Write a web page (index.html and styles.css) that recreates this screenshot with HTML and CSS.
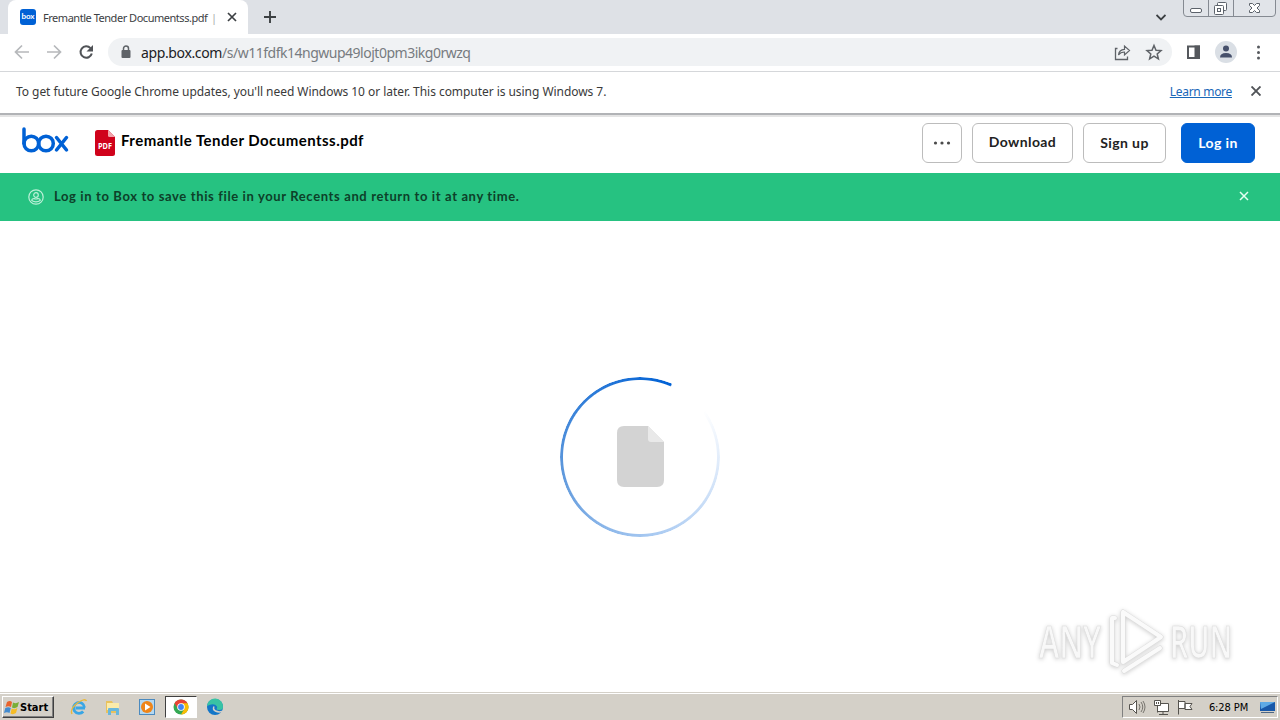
FILE: index.html
```html
<!DOCTYPE html>
<html lang="en">
<head>
    <meta charset="UTF-8">
    <title>Fremantle Tender Documentss.pdf | Box</title>
    <link rel="stylesheet" href="styles.css">
</head>
<body>
    <div class="tab-strip">
        <div class="tab">
            <div class="favicon">box</div>
            <span class="tab-title">Fremantle Tender Documentss.pdf</span>
            <span class="tab-more">|</span>
            <svg class="tab-close" width="10" height="10" viewBox="0 0 10 10"><path d="M1 1l8 8M9 1l-8 8" stroke="#3c4043" stroke-width="1.7"/></svg>
        </div>
        <svg class="new-tab" width="12" height="12" viewBox="0 0 12 12"><path d="M6 0v12M0 6h12" stroke="#3c4043" stroke-width="1.9"/></svg>
        <svg class="tab-search" width="10" height="7" viewBox="0 0 10 7"><path d="M.5 1L5 5.500 9.500 1" fill="none" stroke="#3c4043" stroke-width="1.8"/></svg>
        <svg class="window-buttons" width="93" height="18" viewBox="0 0 93 18">
            <path d="M.5 0v13q0 3.500 3.500 3.500h85q3.500 0 3.500-3.500V0M25.500 0v16.500M50.500 0v16.500" fill="#e1e4e9" stroke="#858a92"/>
            <rect x="7.500" y="8.500" width="11" height="4" rx="1.500" fill="#fff" stroke="#5c626b"/>
            <rect x="34.500" y="2.500" width="9" height="8" rx="1" fill="#fff" stroke="#5c626b"/>
            <rect x="31.500" y="5.500" width="9" height="9" rx="1" fill="#fff" stroke="#5c626b"/>
            <rect x="34.500" y="8.500" width="3" height="3" fill="#fff" stroke="#5c626b"/>
            <path d="M66.500 3.500h3l2 2 2-2h3v2l-2.500 2.500 2.500 2.500v2h-3l-2-2-2 2h-3v-2l2.500-2.500-2.500-2.500z" fill="#fff" stroke="#5c626b"/>
        </svg>
    </div>

    <div class="toolbar">
        <svg class="nav" width="110" height="37" viewBox="0 0 110 37" fill="none">
            <path d="M29 18H16M22 11.500L15.500 18l6.500 6.500M47 18h13M54 11.500l6.500 6.500-6.500 6.500" stroke="#b6b8bb" stroke-width="1.700"/>
            <path d="M90.500 14.200a5.700 5.700 0 1 0 1.300 5.300" stroke="#505357" stroke-width="2"/>
            <path d="M93 11v6.500h-6.500z" fill="#505357"/>
        </svg>
        <div class="omnibox">
            <svg width="10" height="14" viewBox="0 0 10 14"><rect x=".5" y="5" width="9" height="8" rx="1" fill="#5f6368"/><path d="M2.500 6V3.500a2.500 2.500 0 0 1 5 0V6" fill="none" stroke="#5f6368" stroke-width="1.500"/></svg>
            <span class="url"><span class="host">app.box.com</span>/s/w11fdfk14ngwup49lojt0pm3ikg0rwzq</span>
            <svg class="omni-icons" width="50" height="18" viewBox="0 0 50 18" fill="none" stroke="#5f6368">
                <path d="M3.500 5.500H1.500v11h12v-3" stroke-width="1.300"/>
                <path d="M4.500 12q.5-5.500 6-5.700V3l5 4.500-5 4.500V9q-4 0-6 3z" stroke-width="1.200"/>
                <path d="M40 2.500l2 4.700 5 .4-3.800 3.300 1.200 5-4.400-2.700-4.400 2.700 1.200-5-3.800-3.300 5-.4z" stroke-width="1.500"/>
            </svg>
        </div>
        <svg class="side-icons" width="108" height="37" viewBox="0 0 108 37">
            <path d="M16 12.500h11v11.500h-11z" fill="none" stroke="#55585d" stroke-width="2"/><path d="M22.500 11.500h5.500v13.500h-5.500z" fill="#55585d"/>
            <circle cx="54" cy="18" r="11" fill="#dadfe5"/>
            <circle cx="54" cy="14.500" r="3" fill="#46506b"/><path d="M48 23.500q0-4.500 6-4.500t6 4.500z" fill="#46506b"/>
            <g fill="#55585d"><circle cx="86.500" cy="13" r="1.500"/><circle cx="86.500" cy="18.500" r="1.500"/><circle cx="86.500" cy="24" r="1.500"/></g>
        </svg>
    </div>

    <div class="infobar">
        <span class="infobar-text">To get future Google Chrome updates, you'll need Windows 10 or later. This computer is using Windows 7.</span>
        <a class="learn-more">Learn more</a>
        <svg width="10" height="10" viewBox="0 0 10 10"><path d="M.5.5l9 9M9.500.5l-9 9" stroke="#505357" stroke-width="1.900"/></svg>
    </div>

    <header class="box-header">
        <svg class="box-logo" width="48" height="27" viewBox="0 0 48 27" fill="none" stroke="#0061d5" stroke-width="3.500" stroke-linecap="round">
            <path d="M2 2v14.500"/><circle cx="9.300" cy="16.500" r="7.300"/><circle cx="24" cy="16.500" r="7.300"/><path d="M34.500 10.500l10 12.500M44.500 10.500l-10 12.500"/>
        </svg>
        <svg class="pdf-icon" width="20" height="26" viewBox="0 0 20 26">
            <path d="M2.500 0H13l7 7v16.500q0 2.500-2.500 2.500h-15Q0 26 0 23.500v-21Q0 0 2.500 0z" fill="#d0021b"/>
            <path d="M13 0l7 7h-5.500q-1.500 0-1.500-1.500z" fill="#f2a3ab"/>
            <text x="10" y="18.500" class="pdf-label" textLength="14" lengthAdjust="spacingAndGlyphs">PDF</text>
        </svg>
        <h1>Fremantle Tender Documentss.pdf</h1>
        <div class="actions">
            <button class="btn more"><svg width="18" height="4" viewBox="0 0 18 4" fill="#4a4a4a"><circle cx="2.500" cy="2" r="1.600"/><circle cx="9" cy="2" r="1.600"/><circle cx="15.500" cy="2" r="1.600"/></svg></button>
            <button class="btn download">Download</button>
            <button class="btn signup">Sign up</button>
            <button class="btn login">Log in</button>
        </div>
    </header>

    <div class="notice">
        <svg width="16" height="16" viewBox="0 0 16 16" fill="none" stroke="#bdf0d8" stroke-width="1.200"><circle cx="8" cy="8" r="7.200"/><circle cx="8" cy="6" r="2.300"/><path d="M3.800 11.500q0-2 2.200-2 2 1 4 0 2.200 0 2.200 2-1.800 1.300-4.200 1.300t-4.200-1.300z"/></svg>
        <span class="notice-text">Log in to Box to save this file in your Recents and return to it at any time.</span>
        <svg class="notice-close" width="10" height="10" viewBox="0 0 10 10"><path d="M1 1l8 8M9 1l-8 8" stroke="#e4fff3" stroke-width="1.500"/></svg>
    </div>

    <main class="preview">
        <div class="loader">
            <div class="ring"></div>
            <svg class="loader-icon" width="47" height="61" viewBox="0 0 47 61">
                <path d="M7 0h24l16 16v38q0 7-7 7H7q-7 0-7-7V7q0-7 7-7z" fill="#d3d3d3"/>
                <path d="M31 0l16 16H34q-3 0-3-3z" fill="#e9e9e9"/>
            </svg>
        </div>
        <svg class="watermark" width="210" height="74" viewBox="0 0 210 74">
            <g class="mark-text">
                <text x="8" y="52" textLength="62" lengthAdjust="spacingAndGlyphs">ANY</text>
                <text x="139" y="52" textLength="62" lengthAdjust="spacingAndGlyphs">RUN</text>
            </g>
            <g fill="none" stroke-linejoin="round" stroke-linecap="round">
                <path class="mark-edge" d="M84 12h-3v45l5 2M92 56V6l38 25-38 25M92 6l38 25M93 65l36-23"/>
                <path class="mark-fill" d="M84 12h-3v45l5 2M92 56V6l38 25-38 25M92 6l38 25M93 65l36-23"/>
            </g>
        </svg>
    </main>

    <footer class="taskbar">
        <div class="start">
            <svg width="16" height="15" viewBox="0 0 16 15">
                <path d="M3 2q3-2 5 0L7 7Q4.500 5.500 1.500 7z" fill="#e8632c"/><path d="M9 2.500q3 1.500 6-.5L13.500 7q-3 2-5.500.5z" fill="#79ae36"/>
                <path d="M1.300 8q3-1.500 5.500 0l-1.300 5Q3 11.500 0 13z" fill="#438bcf"/><path d="M7.700 8.500q3 1.500 5.700-.5L12 13q-3 2-5.500.5z" fill="#f5bc26"/>
            </svg>
            <span>Start</span>
        </div>
        <div class="launchers">
            <svg width="18" height="18" viewBox="0 0 18 18"><path d="M15 10H5.500M14.500 9.500a5.500 5.500 0 1 0-1.300 4" fill="none" stroke="#39a6e5" stroke-width="2.800"/><path d="M2 16Q-.5 11 8 4.500 15 0 16.500 3" fill="none" stroke="#e9b83a" stroke-width="1.400"/></svg>
            <svg width="18" height="18" viewBox="0 0 18 18"><path d="M2 3h6l1 2h6v10H2z" fill="#e8c25e"/><path d="M3 5h12v7H3z" fill="#fbebaa"/><path d="M4 17v-6q0-1 1-1h9q1 0 1 1v6h-3v-4H7v4z" fill="#69b7dc"/></svg>
            <svg width="18" height="18" viewBox="0 0 18 18"><rect x="1.500" y="1.500" width="15" height="15" fill="#b4d8f1" stroke="#4b8abf"/><circle cx="9" cy="9" r="6" fill="#ef8519"/><path d="M7 5.500l5.500 3.500L7 12.500z" fill="#fff"/></svg>
            <div class="active-app">
                <svg width="16" height="16" viewBox="0 0 16 16"><circle cx="8" cy="8" r="7.500" fill="#34a853"/><path d="M1.500 4.250A7.500 7.500 0 0 1 14.500 4.250L8 8z" fill="#ea4335"/><path d="M1.500 4.250L5 10l3-2V4.500z" fill="#ea4335"/><path d="M8 4.250h6.500a7.500 7.500 0 0 1-6.500 11.250L11.500 9.500z" fill="#fbbc04"/><circle cx="8" cy="8" r="3.800" fill="#fff"/><circle cx="8" cy="8" r="2.900" fill="#4285f4"/></svg>
            </div>
            <svg width="18" height="18" viewBox="0 0 18 18">
                <circle cx="9" cy="9" r="8" fill="#1376c8"/><path d="M1 8A8 8 0 0 1 17 9q0 3-3.500 3-3 0-3-1 1-1 .5-2.500Q8 4.500 1 8z" fill="#38c3a4"/><path d="M8 8.500q-1.500 3 1.500 4.500t6.500.5" fill="none" stroke="#d4d0c8" stroke-width="1.500"/>
            </svg>
        </div>
        <div class="tray">
            <svg width="68" height="18" viewBox="0 0 68 18" stroke="#55534e" fill="#fff" stroke-width="1">
                <path d="M.5 6.500h3l4-4v13l-4-4h-3z"/><path d="M10 6q2 3 0 6M12 4q3.500 5 0 10M14 3q4 6 0 12" fill="none" stroke="#77746e"/>
                <path d="M28.500 5.500h11v8h-11zM30 16.500h9M34 13.500v3" /><path d="M25.500 2.500h6v5h-6zM27.500 4v2M29.500 4v2M28.500 7.500v7"/>
                <path d="M49.500 2v14.500M50 3.500h6v7h-6M56 5.500h7l-2 3 2 3h-7z"/>
            </svg>
            <span class="clock">6:28 PM</span>
            <svg width="17" height="14" viewBox="0 0 17 14"><path d="M1 2h15v9H1z" fill="#1858a9"/><path d="M1 2h15L2 9z" fill="#5eaae6"/><path d="M2 12h13v1H2z" fill="#4d6684"/></svg>
        </div>
    </footer>
</body>
</html>
```
FILE: styles.css
```css
* {
    box-sizing: border-box;
}

body {
    margin: 0;
    width: 1280px;
    height: 720px;
    overflow: hidden;
    display: flex;
    flex-direction: column;
    background: #fff;
    font-family: "Noto Sans", "Open Sans", sans-serif;
}

svg {
    display: block;
    flex: none;
}

span, a, h1 {
    white-space: nowrap;
}

/* browser chrome */
.tab-strip {
    height: 34px;
    flex: none;
    display: flex;
    align-items: flex-start;
    padding-left: 8px;
    background: #dee1e6;
}

.tab {
    width: 240px;
    height: 34px;
    display: flex;
    align-items: center;
    padding-left: 12px;
    background: #fff;
    border-radius: 8px 8px 0 0;
}

.favicon {
    width: 16px;
    height: 16px;
    border-radius: 3px;
    background: #0061d5;
    color: #fff;
    font: bold 8px/15px Lato, sans-serif;
    text-align: center;
}

.tab-title {
    margin-left: 7px;
    width: 168px;
    font-size: 11px;
    letter-spacing: -0.47px;
    color: #3c4043;
}

.tab-more {
    width: 16px;
    font-size: 11px;
    color: #aaa;
}

.new-tab {
    margin: 11px 0 0 16px;
}

.tab-search {
    margin: 14px 17px 0 auto;
}

.window-buttons {
    margin-right: 4px;
}

.toolbar {
    height: 38px;
    flex: none;
    display: flex;
    border-bottom: 1px solid #d5d7da;
}

.nav {
    margin-right: -2px;
}

.omnibox {
    width: 1064px;
    height: 28px;
    margin-top: 4px;
    padding: 0 8px 0 13px;
    display: flex;
    align-items: center;
    border-radius: 14px;
    background: #f0f2f4;
}

.url {
    margin-left: 10px;
    font-size: 14px;
    letter-spacing: -0.49px;
    color: #777b80;
}

.host {
    letter-spacing: -0.37px;
    color: #202124;
}

.omni-icons {
    margin-left: auto;
}

.infobar {
    height: 43px;
    flex: none;
    display: flex;
    align-items: center;
    padding: 0 19px 3px 16px;
    font-size: 12px;
    letter-spacing: -0.05px;
    color: #3a3a3a;
    border-bottom: 2px solid #b1b3b6;
}

.learn-more {
    margin: 0 19px 0 auto;
    letter-spacing: -0.3px;
    color: #1967b8;
    text-decoration: underline;
}

/* box page */
.box-header {
    height: 58px;
    flex: none;
    display: flex;
    border-top: 2px solid #e4e4e4;
    font-family: Lato, sans-serif;
}

.box-logo {
    margin: 10px 0 0 22px;
}

.pdf-icon {
    margin: 13px 6px 0 25px;
}

.pdf-label {
    font: bold 8px "Open Sans", sans-serif;
    fill: #fff;
    text-anchor: middle;
}

h1 {
    margin: 13px 0 0;
    font-size: 15px;
    line-height: 20px;
    letter-spacing: 0.46px;
    color: #000;
}

.actions {
    display: flex;
    margin: 6px 25px 0 auto;
}

.btn {
    height: 40px;
    margin: 0 0 0 10px;
    padding: 0 0 2px;
    display: flex;
    align-items: center;
    justify-content: center;
    border: 1px solid #bcbcbc;
    border-radius: 6px;
    background: #fff;
    color: #222;
    font: bold 14px Lato, sans-serif;
    letter-spacing: 0.4px;
}

.more {
    width: 40px;
    padding: 0;
}

.download {
    width: 101px;
    padding-bottom: 4px;
}

.signup {
    width: 83px;
}

.login {
    width: 74px;
    margin-left: 15px;
    border-color: #0061d5;
    background: #0061d5;
    color: #fff;
}

.notice {
    height: 48px;
    flex: none;
    display: flex;
    align-items: center;
    justify-content: space-between;
    padding: 0 31px 1px 28px;
    background: #26c281;
    font: bold 13px Lato, sans-serif;
}

.notice-text {
    margin: 0 auto 0 10px;
    padding-bottom: 2px;
    letter-spacing: 0.625px;
    color: #0d4029;
}

.notice-close {
    margin-bottom: 2px;
}

.preview {
    flex: 1;
    position: relative;
    display: flex;
    justify-content: center;
    align-items: center;
}

.loader {
    width: 160px;
    height: 160px;
    display: grid;
    place-items: center;
}

.ring, .loader-icon {
    grid-area: 1 / 1;
}

.ring {
    width: 160px;
    height: 160px;
    border-radius: 50%;
    background: conic-gradient(from 24deg, #fff 0deg, #fff 30deg, #dce9fa 75deg, #a6c8f1 150deg, #5e98dc 235deg, #0061d5 359deg, #fff 360deg);
    -webkit-mask: radial-gradient(circle, transparent 76.5px, #000 77.5px);
    mask: radial-gradient(circle, transparent 76.5px, #000 77.5px);
}

.watermark {
    position: absolute;
    right: 39px;
    bottom: 12px;
    filter: drop-shadow(0 1px 2px #ccc);
}

.mark-text {
    font: 600 46px "Open Sans", sans-serif;
    fill: #f8f8f8;
    stroke: #ddd;
    stroke-width: 0.7px;
}

.mark-edge {
    stroke: #ddd;
    stroke-width: 5px;
}

.mark-fill {
    stroke: #fafafa;
    stroke-width: 4px;
}

/* windows taskbar */
.taskbar {
    height: 28px;
    flex: none;
    display: flex;
    align-items: center;
    padding: 2px 2px 0 2px;
    background: #d4d0c8;
    box-shadow: inset 0 1px #d4d0c8, inset 0 2px #fff;
    font-family: "DejaVu Sans Condensed", sans-serif;
}

.start {
    width: 52px;
    height: 22px;
    display: flex;
    align-items: center;
    padding-left: 1px;
    border: 1px solid;
    border-color: #fff #404040 #404040 #fff;
    box-shadow: inset -1px -1px #808080;
    font: bold 11px "DejaVu Sans Condensed", sans-serif;
}

.launchers {
    display: flex;
    align-items: center;
    margin-left: 16px;
    gap: 16px;
}

.active-app {
    width: 32px;
    height: 22px;
    margin: 0 -7px;
    display: grid;
    place-items: center;
    background: #fff;
    border: 1px solid;
    border-color: #404040 #fff #fff #404040;
}

.tray {
    width: 156px;
    height: 22px;
    margin-left: auto;
    padding: 0 1px 0 6px;
    display: flex;
    align-items: center;
    justify-content: space-between;
    border: 1px solid;
    border-color: #808080 #fff #fff #808080;
    font-size: 11px;
}

.clock {
    margin-right: -1px;
    letter-spacing: -0.1px;
}
```
